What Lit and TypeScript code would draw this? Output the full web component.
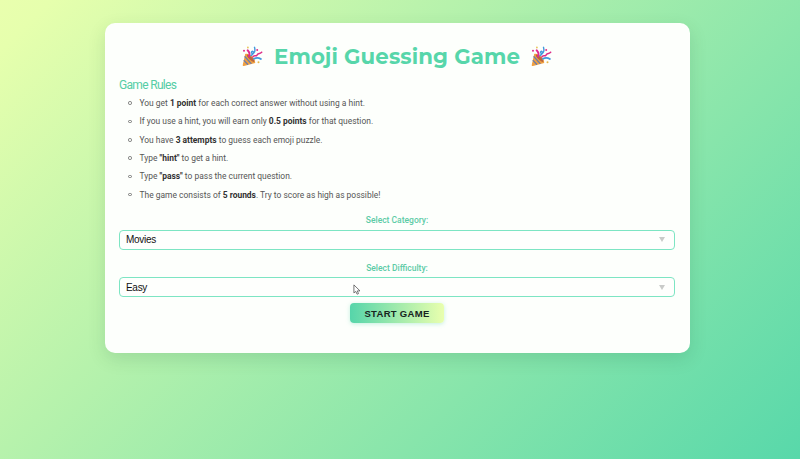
import { LitElement, html, css, svg } from "lit";
import { customElement, property } from "lit/decorators.js";

@customElement("party-popper")
class PartyPopper extends LitElement {
  static styles = css`
    :host { display: block; width: 21px; height: 21px; }
    svg { display: block; width: 100%; height: 100%; }
  `;
  render() {
    return html`<svg viewBox="0 0 21 21" fill="none" stroke-linecap="round">
      ${svg`
        <path d="M3.200 8 0.800 18.800c-.3.9.4 1.400 1.200 1.200L13.200 16.900C13.500 12 7.500 7 3.200 8Z" fill="#f0a040"/>
        <path d="m3 10.800 6 6.600 M2.200 14.600l3.400 3.700" stroke="#6b7dab" stroke-width="1.300"/>
        <ellipse cx="8.600" cy="12.200" rx="1.400" ry="5" transform="rotate(-45 8.600 12.200)" fill="#b8663f"/>
        <path d="M7 10.500C7.900 8.500 7.500 6 5.600 4.300" stroke="#e02b91" stroke-width="1.900"/>
        <path d="M9 9.500c2-.8 3.400-3.400 1.900-4.200-1.300-.6-2 1.400-.7 2 2.300.8 3.300-2.600 2.300-6" stroke="#4398dd" stroke-width="1.400"/>
        <path d="M10.800 11c1.300-2.400 3.200-.2 4.100-1.700.6-1.600 1.500-1.600 2.600-1.800 1-.1 1.600-.8 2.200-1.300" stroke="#de2b87" stroke-width="1.500"/>
        <path d="M12 12.800c2.400-1.500 4.600-1.300 6.900.2" stroke="#4398dd" stroke-width="1.800"/>
        <circle cx="2" cy="4.800" r="1" fill="#e32b86"/>
        <circle cx="5.900" cy="1.500" r=".9" fill="#e7c45a"/>
        <circle cx="15.200" cy="3.900" r="1" fill="#e32b86"/>
        <circle cx="16.500" cy="16.200" r="1" fill="#e5b84b"/>`}
    </svg>`;
  }
}

@customElement("select-field")
class SelectField extends LitElement {
  @property() label = "";
  @property() value = "";
  static styles = css`
    :host { display: block; }
    .label { height: 12px; text-align: center; color: #5ccba6; font: 500 8.500px/12px Roboto, sans-serif; }
    .box {
      box-sizing: border-box; height: 20px; margin-top: 3.500px; padding: 0 9px 0 6px;
      display: flex; align-items: center; justify-content: space-between;
      border: 1px solid #7de5c3; border-radius: 4px; background: #fefffd;
      color: #111; font: 10px/18px "Liberation Sans", Arial, sans-serif; letter-spacing: -.3px;
    }
    .box span { padding-top: 1px; }
    .arrow { width: 6px; height: 5px; fill: #c9cbc9; display: block; }
  `;
  render() {
    return html`<div class="label">${this.label}</div>
      <div class="box"><span>${this.value}</span>
        <svg class="arrow" viewBox="0 0 7 5" preserveAspectRatio="none"><path d="M0 0h7L3.500 5Z"/></svg></div>`;
  }
}

@customElement("app-root")
class AppRoot extends LitElement {
  static styles = css`
    :host {
      display: flex; justify-content: center; align-items: flex-start; position: relative;
      box-sizing: border-box; height: 459px; padding: 23px 6px 0 0; overflow: hidden;
      background: linear-gradient(135deg, #e9ffae 0%, #e6ffad 4%, #58d8aa 100%);
      font-family: Roboto, sans-serif;
    }
    .card {
      box-sizing: border-box; width: 585px; height: 330px; padding: 21px 14.500px 0;
      border-radius: 10px; background: #fdfffc; box-shadow: 0 6px 18px rgba(0, 70, 40, .13);
    }
    .title { display: flex; justify-content: center; align-items: center; gap: 11px; height: 24px; }
    h1 {
      margin: 0; width: 246px; white-space: nowrap; color: #57d6aa;
      font: 700 21.300px/25px Montserrat, Inter, sans-serif; letter-spacing: .1px;
    }
    h2 { margin: 9.500px 0 0; font: 400 12px/15px Roboto, sans-serif; letter-spacing: -.68px; color: #55cda5; }
    ul { margin: 1.500px 0 0; padding: 0; list-style: none; }
    li {
      display: flex; align-items: center; gap: 8px; height: 18.320px; padding-left: 9px;
      font-size: 8.450px; color: #555; white-space: nowrap;
    }
    li::before { content: ""; box-sizing: border-box; width: 3.500px; height: 3.500px; border: 1px solid #777; border-radius: 50%; }
    b { color: #303030; font-weight: 700; }
    .first { margin-top: 10.300px; }
    .second { margin-top: 12px; }
    .start {
      display: block; width: 94px; height: 20px; margin: 5.500px auto 0; padding: 1px 0 0;
      border: 0; border-radius: 4px; background: linear-gradient(90deg, #56d5aa, #e9ffae);
      box-shadow: 0 1px 4px rgba(86, 213, 170, .35); color: #17251e; white-space: nowrap;
      font: 700 9.500px/19px "Liberation Sans", Arial, sans-serif; letter-spacing: .3px;
    }
    .cursor { position: absolute; left: 353px; top: 284px; width: 8px; height: 11px; }
  `;
  render() {
    return html`
      <main class="card">
        <div class="title"><party-popper></party-popper><h1>Emoji Guessing Game</h1><party-popper></party-popper></div>
        <h2>Game Rules</h2>
        <ul>
          <li><span>You get <b>1 point</b> for each correct answer without using a hint.</span></li>
          <li><span>If you use a hint, you will earn only <b>0.5 points</b> for that question.</span></li>
          <li><span>You have <b>3 attempts</b> to guess each emoji puzzle.</span></li>
          <li><span>Type <b>"hint"</b> to get a hint.</span></li>
          <li><span>Type <b>"pass"</b> to pass the current question.</span></li>
          <li><span>The game consists of <b>5 rounds</b>. Try to score as high as possible!</span></li>
        </ul>
        <select-field class="first" label="Select Category:" value="Movies"></select-field>
        <select-field class="second" label="Select Difficulty:" value="Easy"></select-field>
        <button class="start">START GAME</button>
      </main>
      <svg class="cursor" viewBox="0 0 8 11"><path d="M.9.900v8l1.900-1.500 1.300 2.800 1.400-.6-1.200-2.700h2.700Z" fill="#fff" stroke="#555" stroke-width=".8"/></svg>`;
  }
}
